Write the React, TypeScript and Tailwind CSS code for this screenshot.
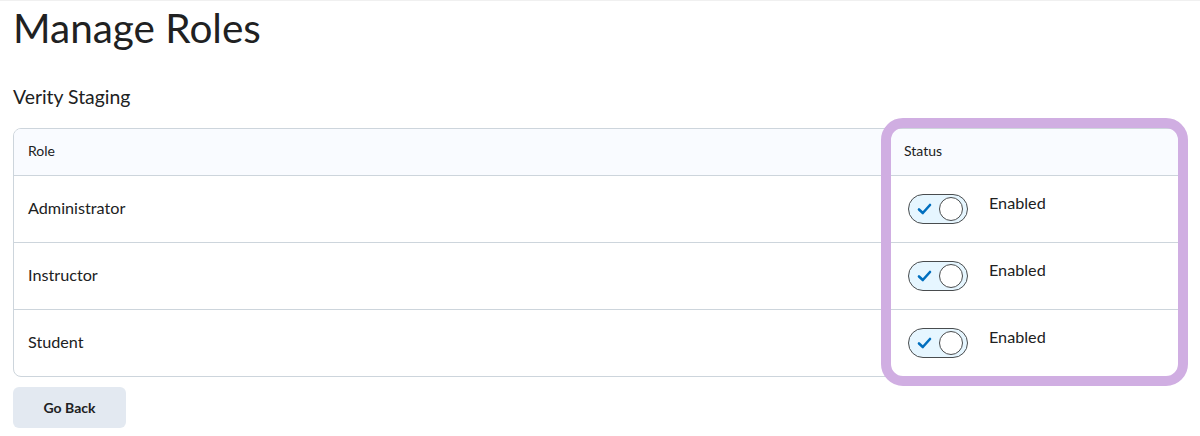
const roles = ['Administrator', 'Instructor', 'Student'];

function Toggle() {
  return (
    <div className="relative h-[30px] w-[60px] shrink-0 rounded-full border border-[#494c4e] bg-[#e6f6ff]">
      <svg className="absolute left-[8px] top-[7px]" width="15" height="14" viewBox="0 0 15 14" fill="none">
        <path d="M2 7.5 L5.8 11 L13 3" stroke="#006fbf" strokeWidth="2.6" strokeLinecap="round" strokeLinejoin="round" />
      </svg>
      <div className="absolute right-[4px] top-[2px] h-[24px] w-[24px] rounded-full border border-[#494c4e] bg-white" />
    </div>
  );
}

export default function App() {
  return (
    <div
      className="relative h-[436px] w-[1200px] overflow-hidden border-t border-[#f0f0f0] bg-white px-[13px] text-[#202122]"
      style={{ fontFamily: 'Lato, "Noto Sans", sans-serif' }}
    >
      <h1 className="pt-[3px] text-[40.5px] leading-[48px] font-normal">Manage Roles</h1>
      <h2 className="mt-[33px] text-[19.4px] leading-[23px] font-normal">Verity Staging</h2>

      <div className="mt-[20px] w-[1173px] overflow-hidden rounded-[8px] border border-[#cdd5dc]">
        <div className="grid h-[47px] grid-cols-[876px_1fr] border-b border-[#cdd5dc] bg-[#f9fbff] text-[14px]">
          <div className="flex items-center pb-[3px] pl-[14px]">Role</div>
          <div className="flex items-center pb-[3px] pl-[14px]">Status</div>
        </div>
        {roles.map((role, i) => (
          <div
            key={role}
            className={
              i < roles.length - 1
                ? 'grid h-[67px] grid-cols-[876px_1fr] border-b border-[#cdd5dc] text-[16.2px]'
                : 'grid h-[66px] grid-cols-[876px_1fr] text-[16.2px]'
            }
          >
            <div className="flex items-center pb-[2px] pl-[14px]">{role}</div>
            <div className="flex items-start pl-[18px] pt-[18px]">
              <Toggle />
              <span className="ml-[21px] mt-[-1px] leading-[20px]">Enabled</span>
            </div>
          </div>
        ))}
      </div>

      <button className="mt-[10px] h-[41px] w-[113px] rounded-[6px] bg-[#e3e9f1] pb-[1px] text-[14px] font-bold text-[#202122]">
        Go Back
      </button>

      {/* highlight ring over the status column */}
      <div className="pointer-events-none absolute left-[881px] top-[117px] h-[268px] w-[307px] rounded-[22px] border-[10px] border-[#d0aee2]" />
    </div>
  );
}
